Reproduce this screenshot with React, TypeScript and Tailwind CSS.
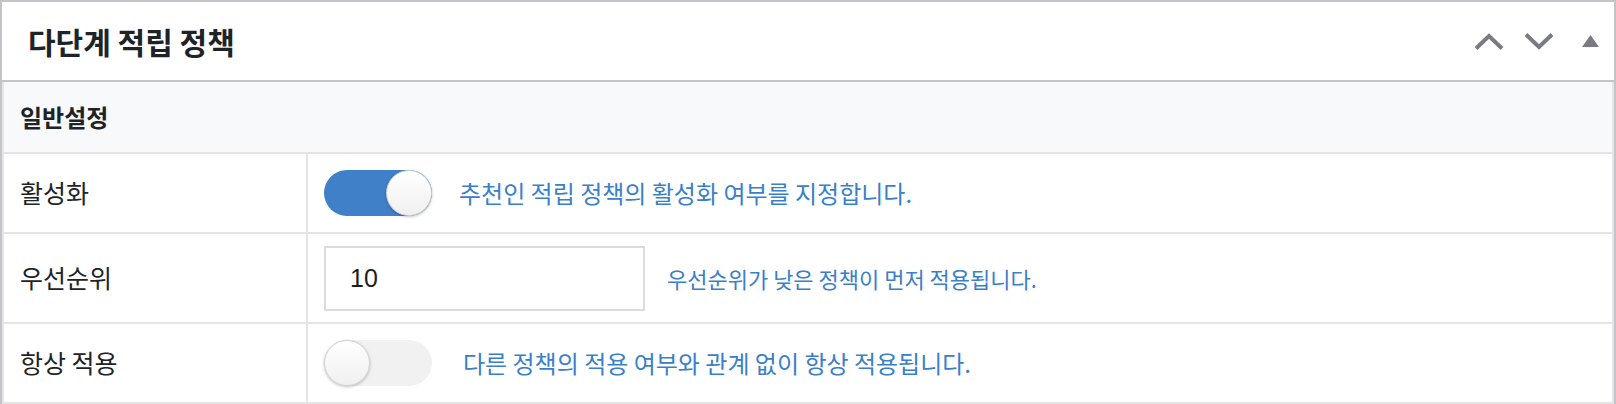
import React from 'react';

const Toggle = ({ on }: { on: boolean }) => (
  <div className={`relative w-[108px] h-[46px] rounded-full shrink-0 ${on ? 'bg-[#3f80c8]' : 'bg-[#f1f1f1]'}`}>
    <div
      className={`absolute top-0 ${on ? 'right-0' : 'left-0'} w-[46px] h-[46px] rounded-full border border-[#d0d0d0] bg-gradient-to-b from-white to-[#f0f0f0] shadow-[0_1px_3px_rgba(0,0,0,0.25)]`}
    />
  </div>
);

const Row = ({ label, height, children }: { label: string; height: string; children: React.ReactNode }) => (
  <div className={`grid grid-cols-[304px_1fr] border-b-2 border-[#e5e5e5] ${height}`}>
    <div className="flex items-center pl-4 border-r-2 border-[#e5e5e5] text-[25px] text-[#1d2327]">{label}</div>
    <div className="flex items-center pl-4">{children}</div>
  </div>
);

export default function App() {
  return (
    <div className="w-[1616px] h-[404px] overflow-hidden bg-white font-['Noto_Sans_CJK_KR','Noto_Sans',sans-serif]">
      <div className="border-2 border-b-0 border-[#c3c4c7]">
        {/* header */}
        <div className="h-[80px] flex items-center justify-between pl-[26px] pr-[15px] border-b-2 border-[#c3c4c7]">
          <h2 className="text-[30px] font-bold text-[#1d2327]">다단계 적립 정책</h2>
          <div className="flex items-center text-[#787c82]">
            <svg width="30" height="17" viewBox="0 0 30 17" fill="none" stroke="currentColor" strokeWidth="4">
              <polyline points="2,15.5 15,3 28,15.5" />
            </svg>
            <svg width="30" height="17" viewBox="0 0 30 17" fill="none" stroke="currentColor" strokeWidth="4" className="ml-[20px]">
              <polyline points="2,1.5 15,14 28,1.5" />
            </svg>
            <svg width="17" height="12" viewBox="0 0 17 12" fill="currentColor" className="ml-[28px]">
              <polygon points="8.5,0 17,12 0,12" />
            </svg>
          </div>
        </div>

        <div className="border-x-2 border-[#e5e5e5]">
          <div className="h-[72px] flex items-center pl-4 bg-[#f8f9fa] border-b-2 border-[#e2e4e7] text-[24px] font-bold text-[#1d2327]">
            일반설정
          </div>

          <Row label="활성화" height="h-[80px]">
            <Toggle on />
            <span className="ml-[27px] text-[24px] text-[#3a80c8]">추천인 적립 정책의 활성화 여부를 지정합니다.</span>
          </Row>
          <Row label="우선순위" height="h-[90px]">
            <input
              readOnly
              value="10"
              className="w-[321px] h-[65px] border-2 border-[#dcdcde] pl-[24px] text-[25px] text-[#1d1d1d] font-['Liberation_Sans',Arial,sans-serif] outline-none"
            />
            <span className="ml-[22px] text-[22px] text-[#3a80c8]">우선순위가 낮은 정책이 먼저 적용됩니다.</span>
          </Row>
          <Row label="항상 적용" height="h-[80px]">
            <Toggle on={false} />
            <span className="ml-[31px] text-[24px] text-[#3a80c8]">다른 정책의 적용 여부와 관계 없이 항상 적용됩니다.</span>
          </Row>
        </div>
      </div>
    </div>
  );
}
